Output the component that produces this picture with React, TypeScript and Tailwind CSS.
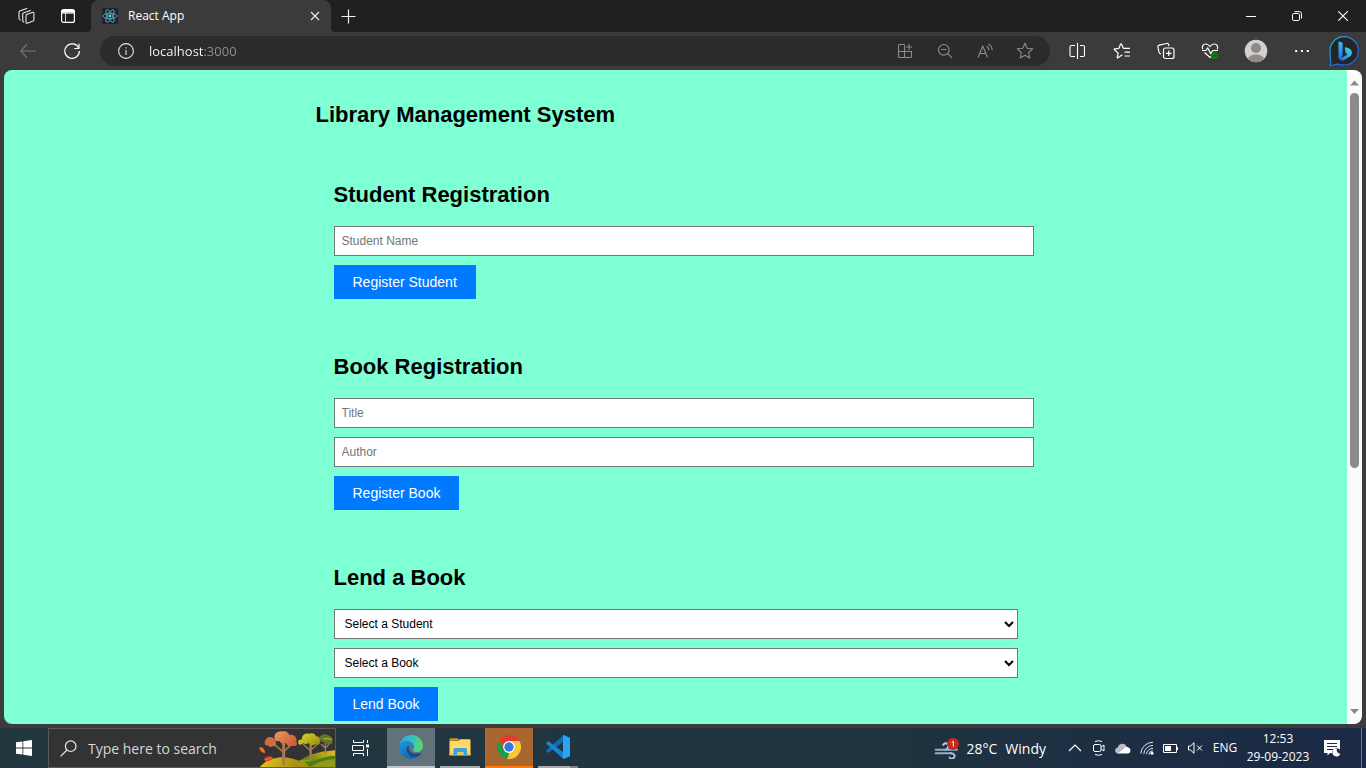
import type { ReactNode } from "react";

type DrawingProps = { w: number; h: number; box: string; className?: string; children: ReactNode };

function Drawing({ w, h, box, className, children }: DrawingProps) {
  return (
    <svg width={w} height={h} viewBox={box} fill="none" aria-hidden="true" className={className ?? "shrink-0"}>
      {children}
    </svg>
  );
}

/* ---------- tab strip ---------- */

function WorkspacesIcon() {
  return (
    <Drawing w={20} h={20} box="0 0 20 20">
      <g stroke="#e8e8e8" strokeWidth="1.1" strokeLinejoin="round" strokeLinecap="round">
        <path d="M10.600 8.600l6.200-2.300q1.100-.3 1.100.8v6.700q0 .8-.7 1.100l-5.900 2.300q-1.200.4-1.300-.8V9.700q0-.8.6-1.100z" />
        <path d="M7.700 15.900q-1-.3-1-1.300V8.200q0-.8.7-1.100L14.300 4.400" />
        <path d="M4.300 14q-1.200-.3-1.300-1.500V6.300q0-.9.700-1.200L10.800 2.400" />
      </g>
    </Drawing>
  );
}

function TabActionsIcon() {
  return (
    <Drawing w={16} h={16} box="0 0 16 16">
      <rect x="1.600" y="1.600" width="12.800" height="12.800" rx="2" stroke="#fff" strokeWidth="1.200" />
      <path d="M1.500 4.500V3.500a2 2 0 0 1 2-2h9a2 2 0 0 1 2 2v1z" fill="#fff" />
      <path d="M1.500 5h13" stroke="#fff" strokeWidth="1.200" />
      <path d="M5.500 5v9" stroke="#fff" strokeWidth=".8" />
    </Drawing>
  );
}

function ReactLogo() {
  return (
    <Drawing w={16} h={16} box="0 0 16 16">
      <rect width="16" height="16" rx="1.500" fill="#20232a" />
      <g stroke="#58b8d0" strokeWidth=".8">
        <ellipse cx="8" cy="8" rx="7" ry="2.700" />
        <ellipse cx="8" cy="8" rx="7" ry="2.700" transform="rotate(60 8 8)" />
        <ellipse cx="8" cy="8" rx="7" ry="2.700" transform="rotate(120 8 8)" />
      </g>
      <circle cx="8" cy="8" r="1.400" fill="#61dafb" />
    </Drawing>
  );
}

function TabStrip() {
  return (
    <header className="flex h-8 shrink-0 bg-[#3b3b3b] text-white">
      <div className="flex w-[91px] shrink-0 items-center rounded-br-sm bg-[#202020] pl-4">
        <button type="button" aria-label="Workspaces" className="flex w-5 justify-center">
          <WorkspacesIcon />
        </button>
        <button type="button" aria-label="Tab actions" className="ml-6 flex w-4 justify-center">
          <TabActionsIcon />
        </button>
      </div>
      <div className="flex w-60 shrink-0 items-center bg-[#202020]">
        <div className="flex h-8 w-full items-center rounded-t-lg bg-[#3b3b3b] pr-2 pl-[11px]">
          <ReactLogo />
          <span className="ml-2.5 flex-1 text-xs">React App</span>
          <button type="button" aria-label="Close tab" className="flex size-4 items-center justify-center">
            <Drawing w={10} h={10} box="0 0 10 10">
              <path d="M1 1l8 8M9 1L1 9" stroke="#e8e8e8" strokeWidth="1.200" />
            </Drawing>
          </button>
        </div>
      </div>
      <div className="flex min-w-0 flex-1 items-center rounded-bl-sm bg-[#202020] pl-[10px]">
        <button type="button" aria-label="New tab" className="flex">
          <Drawing w={15} h={15} box="0 0 15 15">
            <path d="M.5 7.500h14M7.500 .5v14" stroke="#f0f0f0" strokeWidth="1.200" />
          </Drawing>
        </button>
        <div className="ml-auto flex">
          <button type="button" aria-label="Minimize" className="flex h-8 w-[46px] items-center justify-center">
            <Drawing w={10} h={10} box="0 0 10 10">
              <path d="M0 5.500h10" stroke="#fff" />
            </Drawing>
          </button>
          <button type="button" aria-label="Restore" className="flex h-8 w-[46px] items-center justify-center">
            <Drawing w={10} h={10} box="0 0 10 10">
              <rect x=".5" y="2.500" width="7" height="7" rx="1.200" stroke="#fff" />
              <path d="M2.500 .6H7.500a2 2 0 0 1 2 2v5" stroke="#fff" />
            </Drawing>
          </button>
          <button type="button" aria-label="Close" className="flex h-8 w-[46px] items-center justify-center">
            <Drawing w={10} h={10} box="0 0 10 10">
              <path d="M.2 .2l9.600 9.600M9.800 .2L.2 9.800" stroke="#fff" strokeWidth="1.100" />
            </Drawing>
          </button>
        </div>
      </div>
    </header>
  );
}

/* ---------- address bar ---------- */

function IconButton({ label, className, children }: { label: string; className: string; children: ReactNode }) {
  return (
    <button type="button" aria-label={label} className={`flex h-[30px] shrink-0 items-center justify-center ${className}`}>
      {children}
    </button>
  );
}

function BingLogo() {
  return (
    <Drawing w={32} h={32} box="0 0 32 32">
      <defs>
        <linearGradient id="bingRing" x1="4" y1="4" x2="26" y2="30" gradientUnits="userSpaceOnUse">
          <stop stopColor="#20b4d8" />
          <stop offset=".55" stopColor="#2377e8" />
          <stop offset="1" stopColor="#2456d8" />
        </linearGradient>
        <linearGradient id="bingStem" x1="12" y1="6" x2="13" y2="26" gradientUnits="userSpaceOnUse">
          <stop stopColor="#37bdff" />
          <stop offset=".6" stopColor="#2c8ef5" />
          <stop offset="1" stopColor="#2256d8" />
        </linearGradient>
        <linearGradient id="bingSwoosh" x1="24" y1="15" x2="12" y2="25" gradientUnits="userSpaceOnUse">
          <stop stopColor="#37d5e8" />
          <stop offset=".6" stopColor="#2d9bf0" />
          <stop offset="1" stopColor="#2560e8" />
        </linearGradient>
      </defs>
      <path d="M2 30.300c.6-1 .8-2 .7-3.500L2 17A14.200 14.200 0 1 1 16.500 30c-3 0-5-.8-7-.8-2.500 0-4.500 1.400-7.500 1.100z" fill="#252525" stroke="url(#bingRing)" strokeWidth="1.200" strokeLinejoin="round" />
      <path d="M10.500 6.200l3.500 1.300c.4.200.6.5.6 1v11.300l-1 3.700c-1.600.9-3.100-.2-3.100-2.100z" fill="url(#bingStem)" />
      <path d="M16.800 13.200c-.3-.7.2-1.100.9-.9l2.900 1c2.300.9 3.300 2.600 3.200 4.500 0 1.700-.8 3-2.300 4l-5.200 3.300c-2.600 1.500-5.600-.1-5.800-3 .6 1.300 1.900 1.400 3 .8l6.100-3.600-1.300-.7c-.4-.200-.6-.5-.8-1z" fill="url(#bingSwoosh)" />
    </Drawing>
  );
}

function Toolbar() {
  return (
    <div className="flex h-[38px] shrink-0 items-center bg-[#3b3b3b] pr-1.5 pl-5">
      <IconButton label="Back" className="w-4">
        <Drawing w={16} h={16} box="0 0 16 16">
          <path d="M7 1.200.8 8 7 14.800M.8 8H16" stroke="#7b7b7b" strokeWidth="1.100" />
        </Drawing>
      </IconButton>
      <IconButton label="Refresh" className="ml-7 w-4">
        <Drawing w={16} h={16} box="0 0 16 16">
          <path d="M14.800 5.200A7.300 7.300 0 1 0 15.400 8" stroke="#fff" strokeWidth="1.200" />
          <path d="M15 .8v4.700h-4.700" stroke="#fff" strokeWidth="1.200" />
        </Drawing>
      </IconButton>
      <div className="ml-5 flex h-[30px] min-w-0 flex-1 items-center rounded-full bg-[#2b2b2b] pr-[13px] pl-[18px]">
        <IconButton label="View site information" className="w-4">
          <Drawing w={16} h={16} box="0 0 16 16">
            <circle cx="8" cy="8" r="7.400" stroke="#e4e4e4" strokeWidth="1.100" />
            <path d="M8 7v5M8 4.200v1.300" stroke="#c8c8c8" strokeWidth="1.300" />
          </Drawing>
        </IconButton>
        <input
          type="text"
          aria-label="Address"
          defaultValue="localhost:3000"
          className="ml-[15px] h-5 min-w-0 flex-1 bg-linear-to-r from-white from-[54px] to-[#929292] to-[54px] bg-clip-text text-[13px] text-transparent outline-none"
        />
        <IconButton label="Install app" className="w-10 pl-2">
          <Drawing w={16} h={16} box="0 0 16 16">
            <path d="M7.500 1.500h-5a1 1 0 0 0-1 1v11a1 1 0 0 0 1 1h11a1 1 0 0 0 1-1v-5h-13M7.500 1.500v13M12 1v6M9 4h6" stroke="#8c8c8c" strokeWidth="1.100" />
          </Drawing>
        </IconButton>
        <IconButton label="Zoom out" className="w-10 pl-2">
          <Drawing w={16} h={16} box="0 0 16 16">
            <circle cx="6.800" cy="6.800" r="5.300" stroke="#8c8c8c" strokeWidth="1.100" />
            <path d="M4 6.500h5.500M10.700 10.700l4.500 4.500" stroke="#8c8c8c" strokeWidth="1.100" />
          </Drawing>
        </IconButton>
        <IconButton label="Read aloud" className="w-10 pl-2">
          <Drawing w={18} h={16} box="0 0 18 16">
            <path d="M2 14.500 6.800 3.200 11.600 14.500M3.700 10.500h6.200M10.800 3.200q2 1.300 2.200 4M12.500 1q3.400 2 3.700 6" stroke="#8c8c8c" strokeWidth="1.100" />
          </Drawing>
        </IconButton>
        <IconButton label="Add to favorites" className="w-9 pl-3">
          <Drawing w={18} h={18} box="0 0 18 18">
            <path d="M9 1.300l2.200 5 5.500.5-4.100 3.700 1.200 5.500L9 13.200 4.200 16l1.200-5.500-4.100-3.700 5.500-.5z" stroke="#8c8c8c" strokeWidth="1.100" strokeLinejoin="round" />
          </Drawing>
        </IconButton>
      </div>
      <div className="ml-[5px] flex shrink-0 items-center text-white">
        <IconButton label="Split screen" className="w-11">
          <Drawing w={16} h={18} box="0 0 16 18">
            <path d="M6 3.500H2.500A1.500 1.500 0 0 0 1 5v8a1.500 1.500 0 0 0 1.500 1.500H6M11 3.500h3A1.500 1.500 0 0 1 15.500 5v8a1.500 1.500 0 0 1-1.500 1.500h-3M8.500 1v16" stroke="#fff" strokeWidth="1.100" />
          </Drawing>
        </IconButton>
        <IconButton label="Favorites" className="w-[46px]">
          <Drawing w={18} h={18} box="0 0 18 18">
            <path d="M9.300 12.800 5 15.700c-.6.400-1 .1-.8-.6l1-4L1.500 7.800c-.4-.5-.3-.9.4-1l3.900-.4L7.500 2.300c.3-.6.8-.6 1.100 0l1.700 4H17M11.500 10.200H17M11.500 14H17" stroke="#fff" strokeWidth="1.200" strokeLinejoin="round" />
          </Drawing>
        </IconButton>
        <IconButton label="Collections" className="w-[42px]">
          <Drawing w={18} h={18} box="0 0 18 18">
            <rect x="6.500" y="6" width="10.500" height="10.500" rx="2" stroke="#fff" strokeWidth="1.200" />
            <path d="M4 11.800c-1 .1-1.700-.3-1.900-1.300L1 5.300c-.2-1.100.2-1.900 1.300-2.200L9.400 1.500c1.200-.3 2 .1 2.300 1.200l.3 1.500M11.700 8.500v5.500M9 11.300h5.500" stroke="#fff" strokeWidth="1.200" />
          </Drawing>
        </IconButton>
        <IconButton label="Browser essentials" className="w-[46px]">
          <Drawing w={18} h={18} box="0 0 18 18">
            <path d="M1.800 7.200C.5 4.500 2 2 4.700 2 6.700 2 8 3.200 9 4.500 10 3.200 11.300 2 13.300 2c2.700 0 4.200 2.500 2.900 5.200M3.500 10.500l5.500 5 1.500-1.300" stroke="#fff" strokeWidth="1.200" />
            <path d="M1 8.500h4l1.700-2.700 3 6 2-3.300H17" stroke="#fff" strokeWidth="1.200" strokeLinejoin="round" />
            <circle cx="13.500" cy="13.500" r="3.600" fill="#107c10" />
            <path d="M11.900 13.600l1.100 1.100 2.100-2.200" stroke="#1d4d1d" />
          </Drawing>
        </IconButton>
        <IconButton label="Profile" className="w-[46px]">
          <Drawing w={24} h={24} box="0 0 24 24">
            <clipPath id="avatar">
              <circle cx="12" cy="12" r="11.300" />
            </clipPath>
            <g clipPath="url(#avatar)">
              <path fill="#d2d0ce" d="M0 0h24v24H0z" />
              <circle cx="12" cy="9" r="5" fill="#8f8a86" />
              <ellipse cx="12" cy="20.500" rx="8" ry="5" fill="#8f8a86" />
            </g>
          </Drawing>
        </IconButton>
        <IconButton label="Settings and more" className="w-[46px]">
          <Drawing w={16} h={4} box="0 0 16 4">
            <path d="M1.200 1h2v2h-2zM7 1h2v2H7zM12.800 1h2v2h-2z" fill="#fff" />
          </Drawing>
        </IconButton>
        <IconButton label="Bing chat" className="ml-[3px] w-8">
          <BingLogo />
        </IconButton>
      </div>
    </div>
  );
}

/* ---------- page ---------- */

function Section({ title, action, children }: { title: string; action: string; children: ReactNode }) {
  return (
    <section className="px-[18px]">
      <h2 className="mb-[19px] text-[22px] leading-[25px] font-bold">{title}</h2>
      <form className="flex flex-col items-start gap-[9px]" onSubmit={(event) => event.preventDefault()}>
        {children}
        <button type="submit" className="h-[34px] bg-[#007bff] px-[19px] text-[14px] text-white">
          {action}
        </button>
      </form>
    </section>
  );
}

function TextField({ label }: { label: string }) {
  return (
    <input
      type="text"
      aria-label={label}
      placeholder={label}
      className="h-[30px] w-[calc(100%+16px)] border border-[#767676] bg-white px-[7px] text-xs placeholder:text-[#757575]"
    />
  );
}

function SelectField({ label }: { label: string }) {
  return (
    <select aria-label={label} className="h-[30px] w-full border border-[#767676] bg-white px-1.5 text-xs text-black">
      <option>{label}</option>
    </select>
  );
}

function LibraryPage() {
  return (
    <main className="min-w-0 flex-1 overflow-hidden bg-[#7fffd4] font-['Liberation_Sans',Arial,sans-serif] text-black">
      <div className="mx-auto max-w-[720px] pt-8">
        <h1 className="text-[22px] leading-[25px] font-bold">Library Management System</h1>
        <div className="mt-[55px] flex flex-col gap-[55px]">
          <Section title="Student Registration" action="Register Student">
            <TextField label="Student Name" />
          </Section>
          <Section title="Book Registration" action="Register Book">
            <TextField label="Title" />
            <TextField label="Author" />
          </Section>
          <Section title="Lend a Book" action="Lend Book">
            <SelectField label="Select a Student" />
            <SelectField label="Select a Book" />
          </Section>
        </div>
      </div>
    </main>
  );
}

function ScrollBar() {
  return (
    <div className="flex w-[15px] shrink-0 flex-col items-center bg-[#fcfcfc] py-2">
      <Drawing w={9} h={9} box="0 0 9 9">
        <path d="M0 7.500 4.500 2.500 9 7.500z" fill="#8b8b8b" />
      </Drawing>
      <div className="mt-1.5 flex w-[9px] flex-1 flex-col">
        <div className="h-[61%] rounded-full bg-[#8b8b8b]" />
      </div>
      <Drawing w={9} h={9} box="0 0 9 9">
        <path d="M0 2 4.500 7 9 2z" fill="#8b8b8b" />
      </Drawing>
    </div>
  );
}

/* ---------- taskbar ---------- */

function AutumnTrees() {
  return (
    <Drawing w={78} h={38} box="772 42 234 114" className="ml-auto shrink-0">
      <defs>
        <linearGradient id="hillA" x1="800" y1="125" x2="880" y2="160" gradientUnits="userSpaceOnUse">
          <stop stopColor="#e0c020" />
          <stop offset="1" stopColor="#a8920f" />
        </linearGradient>
        <linearGradient id="hillB" x1="990" y1="105" x2="930" y2="160" gradientUnits="userSpaceOnUse">
          <stop stopColor="#d8b51c" />
          <stop offset="1" stopColor="#4f7a18" />
        </linearGradient>
        <linearGradient id="crownA" x1="820" y1="50" x2="870" y2="100" gradientUnits="userSpaceOnUse">
          <stop stopColor="#f09a58" />
          <stop offset="1" stopColor="#c8603c" />
        </linearGradient>
        <linearGradient id="crownB" x1="910" y1="55" x2="950" y2="100" gradientUnits="userSpaceOnUse">
          <stop stopColor="#d8d028" />
          <stop offset="1" stopColor="#948a10" />
        </linearGradient>
      </defs>
      <path d="M880 156c20-26 60-46 126-50v50z" fill="url(#hillB)" />
      <path d="M895 138c20-8 40-4 56 2 18-12 34-16 55-18v34H880z" fill="#8f9c18" />
      <path d="M915 140c30 2 50-16 91-18v10c-36 2-56 14-76 24z" fill="#4f7d16" />
      <path d="M780 156c22-24 54-32 84-28 28 4 48 14 66 28z" fill="url(#hillA)" />
      <g stroke="#a8784e" strokeLinecap="round">
        <path d="M852 146V88" strokeWidth="9" />
        <path d="M852 112l-28-24M852 110l26-24M852 96l-8-22" strokeWidth="5" />
        <path d="M933 134V86" strokeWidth="7" />
        <path d="M933 108l-22-20M933 106l20-18" strokeWidth="4" />
        <path d="M977 114V84M977 100l12-14M977 100l-12-12" strokeWidth="4" />
      </g>
      <path d="M826 72c-6-14 8-26 22-23 12-2 20 4 20 11 16-3 26 9 22 20 6 10-4 16-12 12-10 4-18 0-18-8-10 4-18 0-20-6-8 2-14 0-14-6z" fill="url(#crownA)" />
      <path d="M795 84c0-12 10-20 20-17 10 2 14 8 13 15 4 8-2 13-9 12-8 4-13 0-15-3-6 1-9-2-9-7z" fill="#cf6c40" />
      <path d="M908 74c-4-12 8-20 18-18 12-4 22 0 22 8 12 0 18 8 14 16 0 8-10 12-16 8-8 6-16 2-18-4-8 4-14 4-16 0-8 8-18 6-16-2-2-6 4-10 12-8z" fill="url(#crownB)" />
      <path d="M960 66c6-8 16-10 24-6 10 2 14 8 12 14 4 6 2 14-4 14-8 2-12-2-14-8-6 4-10 2-12-4-6 0-8-5-6-10z" fill="#66752a" />
      <path d="M972 72c10-4 18 0 26 2" stroke="#a0a53c" strokeWidth="5" />
      <path d="M779 97c10-2 16 4 18 17-10 1-17-5-18-17z" fill="#e87422" />
      <path d="M792 134c4-10 14-12 28-8-4 12-18 16-28 8z" fill="#dc3d1c" />
      <path d="M796 136q8-3 20-8" stroke="#f8a040" strokeWidth="2" />
    </Drawing>
  );
}

function EdgeLogo() {
  return (
    <Drawing w={24} h={24} box="0 0 24 24">
      <defs>
        <linearGradient id="edgeTop" x1="2" y1="8" x2="24" y2="10" gradientUnits="userSpaceOnUse">
          <stop stopColor="#2fa8df" />
          <stop offset=".5" stopColor="#35c1c4" />
          <stop offset="1" stopColor="#5fdc5c" />
        </linearGradient>
        <linearGradient id="edgeLeft" x1="3" y1="6" x2="12" y2="24" gradientUnits="userSpaceOnUse">
          <stop stopColor="#1f96dc" />
          <stop offset="1" stopColor="#1461b4" />
        </linearGradient>
      </defs>
      <path d="M.2 11C1 4.500 6 0 12 0c6.800 0 12 4.800 12 10.700 0 4.400-3.200 6.300-6.300 6.300-3 0-4.600-1.400-3.600-2.600C17 11 12.500 6 7.500 6 4 6 1 8 .2 11z" fill="url(#edgeTop)" />
      <path d="M.1 12C.3 8.500 3.500 6 7.500 6c4 0 7.300 2.700 7.300 5.400-1-1.500-3-2.300-4.800-1.300C6.500 12 7 17.500 10.500 20.500c2.700 2.300 5.500 2.600 7.700 2C12.500 26 .1 23.500.1 12z" fill="url(#edgeLeft)" />
      <path d="M10 10.100c-2.900 1.700-3.600 7 .5 10.400 3.500 3 8.800 2.700 11.700-2.300.2-.4-.1-.6-.5-.4-5.500 2.700-12.200-.5-12-5.500.1-1 .2-1.500.3-2.200z" fill="#124f93" />
    </Drawing>
  );
}

function ExplorerLogo() {
  return (
    <Drawing w={22} h={18} box="0 0 22 18">
      <path d="M.5 1.200A1 1 0 0 1 1.500.2H9l1 2.300H.5z" fill="#e0920a" />
      <path d="M.5 2.800h9L11 1.200h9.500a1 1 0 0 1 1 1v15H.5z" fill="#ffd866" />
      <path d="M.5 15h21v2.300H.5z" fill="#f6c44d" />
      <path d="M4.500 18v-6.500A1.500 1.500 0 0 1 6 10h10.500a1.500 1.500 0 0 1 1.500 1.500V18h-3.300v-3.700H8V18z" fill="#3f9ee0" />
    </Drawing>
  );
}

function ChromeLogo() {
  return (
    <Drawing w={24} h={24} box="0 0 24 24">
      <path d="M12 12 1.600 6A12 12 0 0 1 22.400 6z" fill="#e33b2e" />
      <path d="M12 6h10.400A12 12 0 0 1 12 24l5.200-9z" fill="#fcc934" />
      <path d="M1.600 6 6.800 15 12 18l2.600-1.500L12 24A12 12 0 0 1 1.600 6z" fill="#1e9b4c" />
      <path d="M12 24l5.200-9L12 18l-1 5.900z" fill="#fcc934" />
      <path d="M12 24l-2-.2L14 17l3.200-2z" fill="#fcc934" />
      <circle cx="12" cy="12" r="5.900" fill="#fff" />
      <circle cx="12" cy="12" r="4.700" fill="#3478e5" />
    </Drawing>
  );
}

function CodeLogo() {
  return (
    <Drawing w={24} h={24} box="0 0 24 24">
      <path d="M.5 16.200c-.4-.3-.4-.8 0-1.200L17.500.2v6.300L2.700 17.500c-.4.300-.8.300-1.100 0z" fill="#0f6fb4" />
      <path d="M.5 7.900c-.4.400-.4.900 0 1.200L17.500 23.900v-6.300L2.700 6.500c-.4-.300-.8-.3-1.100.1z" fill="#1686d0" />
      <path d="M17 .6c.4-.5.900-.6 1.400-.4L23.200 2.500c.5.200.8.600.8 1.100v16.800c0 .5-.3.900-.8 1.100l-4.800 2.300c-.5.200-1 .1-1.400-.3z" fill="#2aa5f2" />
    </Drawing>
  );
}

function TaskButton({ label, tone, bar, children }: { label: string; tone?: string; bar: string; children: ReactNode }) {
  return (
    <button type="button" aria-label={label} className={`flex h-10 w-12 shrink-0 flex-col items-center ${tone ?? ""}`}>
      <span className="flex flex-1 items-center">{children}</span>
      <span className={`h-0.5 ${bar}`} />
    </button>
  );
}

function TrayButton({ label, children }: { label: string; children: ReactNode }) {
  return (
    <button type="button" aria-label={label} className="flex h-10 w-6 shrink-0 items-center justify-center">
      {children}
    </button>
  );
}

function Taskbar() {
  return (
    <footer className="flex h-10 shrink-0 bg-linear-to-r from-[#22383f] via-[#20343f] via-60% to-[#1b2946] text-white">
      <button type="button" aria-label="Start" className="flex w-12 shrink-0 items-center justify-center">
        <Drawing w={16} h={16} box="0 0 16 16">
          <path d="M0 2.300 6.500 1.400v6.100H0zM7.300 1.200 16 0v7.500H7.300zM0 8.400h6.500v6.200L0 13.700zM7.300 8.400H16V16l-8.700-1.200z" fill="#fff" />
        </Drawing>
      </button>
      <label className="flex w-72 shrink-0 items-center border border-[#5c5858] bg-[#333] pl-[11px]">
        <Drawing w={17} h={17} box="0 0 17 17">
          <circle cx="10.700" cy="6.200" r="5.300" stroke="#e8e8e8" strokeWidth="1.200" />
          <path d="M6.900 10 .6 16.300" stroke="#e8e8e8" strokeWidth="1.200" />
        </Drawing>
        <input
          type="text"
          aria-label="Type here to search"
          placeholder="Type here to search"
          className="ml-[11px] w-36 bg-transparent text-[14px] outline-none placeholder:text-[#d6d6d6]"
        />
        <AutumnTrees />
      </label>
      <button type="button" aria-label="Task view" className="mr-[3px] flex w-12 shrink-0 items-center justify-center">
        <Drawing w={17} h={16} box="0 0 17 16">
          <path d="M1.500 0v2.500h10V0M1.500 16v-2.500h10V16M.5 5.500h11v5H.5zM15.500 0v3M15.500 9v7" stroke="#fff" />
          <path d="M14 4.500h3v3h-3z" fill="#fff" />
        </Drawing>
      </button>
      <div className="flex gap-px">
        <TaskButton label="Microsoft Edge" tone="bg-[#62727a]" bar="w-12 bg-[#c0c4c8]">
          <EdgeLogo />
        </TaskButton>
        <TaskButton label="File Explorer" bar="w-10 bg-[#a9adb2]">
          <ExplorerLogo />
        </TaskButton>
        <TaskButton label="Google Chrome" tone="bg-[#a9672f]" bar="w-12 bg-[#ff7a0a]">
          <ChromeLogo />
        </TaskButton>
        <TaskButton label="Visual Studio Code" bar="w-10 border-r-8 border-[#7f868b] bg-[#a9adb2]">
          <CodeLogo />
        </TaskButton>
      </div>
      <div className="ml-auto flex items-center">
        <button type="button" className="mr-[17px] flex items-center text-[14px]">
          <Drawing w={26} h={22} box="42 105 78 66">
            <g strokeLinecap="round" strokeWidth="6">
              <path d="M70 128c6-8 18-4 14 8-1 4-4 7-8 7" stroke="#c3d4e6" />
              <path d="M47 143h64" stroke="#8fb0d0" />
              <path d="M47 154h46" stroke="#8fb0d0" />
              <path d="M93 154c10 0 14 8 8 14-4 4-10 2-12-1" stroke="#a9c3dd" />
            </g>
            <circle cx="99" cy="126" r="18" fill="#c42b1c" />
            <path d="M95 121l5-3v16" stroke="#fff" strokeWidth="3" />
          </Drawing>
          <span className="ml-[7px]">28°C</span>
          <span className="ml-2">Windy</span>
        </button>
        <TrayButton label="Show hidden icons">
          <Drawing w={14} h={8} box="0 0 14 8">
            <path d="M1 7l6-6 6 6" stroke="#fff" strokeWidth="1.200" />
          </Drawing>
        </TrayButton>
        <TrayButton label="Meet now">
          <Drawing w={14} h={16} box="0 0 14 16">
            <rect x="1.500" y="4.500" width="7.500" height="7" rx="1.500" stroke="#fff" />
            <path d="M9 7l3-2v6L9 9M3 1.500q3.500-1.500 7 0M3 14.500q3.500 1.500 7 0" stroke="#fff" />
          </Drawing>
        </TrayButton>
        <TrayButton label="OneDrive">
          <Drawing w={16} h={11} box="0 0 16 11">
            <path d="M3.500 10.500a3 3 0 0 1-.6-6A4.700 4.700 0 0 1 11.500 3L12 9z" fill="#b9bec4" />
            <path d="M3 10.600 9 5.500a3.300 3.300 0 0 1 4.500-1 3.200 3.200 0 0 1-.5 6.100z" fill="#fff" />
          </Drawing>
        </TrayButton>
        <TrayButton label="Wi-Fi">
          <Drawing w={14} h={14} box="0 0 14 14">
            <path d="M.8 12.500A12 12 0 0 1 13 1.300M3.800 13A9 9 0 0 1 13 4.500M6.500 13.200A6.500 6.500 0 0 1 13 7.400M9 13.500a4 4 0 0 1 4-3.700" stroke="#e0e4ea" />
            <circle cx="12" cy="12.300" r="1.500" fill="#fff" />
          </Drawing>
        </TrayButton>
        <TrayButton label="Battery">
          <Drawing w={16} h={9} box="0 0 16 9">
            <path d="M.5.500h13v8H.5zM14.500 3v3" stroke="#fff" />
            <path d="M2 2h6v5H2z" fill="#fff" />
          </Drawing>
        </TrayButton>
        <TrayButton label="Muted">
          <Drawing w={15} h={12} box="0 0 15 12">
            <path d="M.5 4v4h2L6 11.300V.7L2.500 4zM9 3.500l5 5M14 3.500l-5 5" stroke="#fff" />
          </Drawing>
        </TrayButton>
        <button type="button" className="w-9 text-center text-xs">
          ENG
        </button>
        <button type="button" className="flex w-[70px] flex-col items-center text-xs leading-[18px]">
          <span>12:53</span>
          <span>29-09-2023</span>
        </button>
        <button type="button" aria-label="Notifications" className="flex w-10 items-center justify-center">
          <Drawing w={18} h={17} box="0 0 18 17">
            <path d="M0 0h16v13H6l-2.500 2.500V13H0z" fill="#fff" />
            <path d="M3 3.500h10M3 6.500h10M3 9.500h6" stroke="#1b2946" strokeWidth="1.200" />
            <circle cx="12.500" cy="12.500" r="4.300" fill="#1b2946" />
            <path d="M13 8.500a4 4 0 1 0 3.300 5.200A3.800 3.800 0 0 1 13 8.500z" fill="#fff" />
          </Drawing>
        </button>
        <span className="mr-1 ml-2 h-10 w-px bg-[#6e7a90]" />
      </div>
    </footer>
  );
}

export default function App() {
  return (
    <div className="flex h-screen flex-col overflow-hidden bg-[#3b3b3b] font-['Open_Sans','Noto_Sans',sans-serif]">
      <TabStrip />
      <Toolbar />
      <div className="mx-1 mb-1 flex min-h-0 flex-1 overflow-hidden rounded-lg">
        <LibraryPage />
        <ScrollBar />
      </div>
      <Taskbar />
    </div>
  );
}
